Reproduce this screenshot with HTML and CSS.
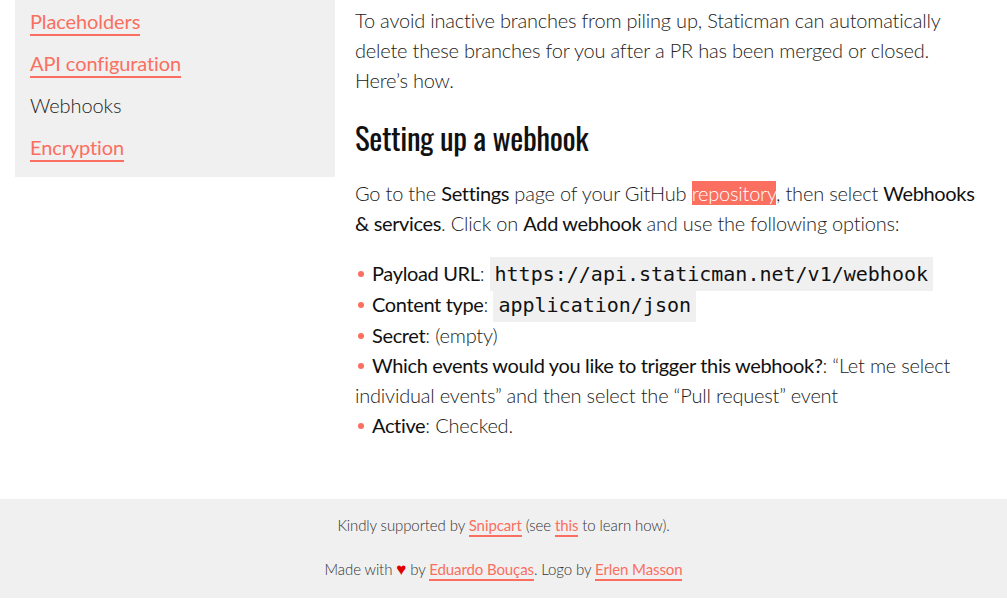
FILE: index.html
```html
<!DOCTYPE html>
<html lang="en">
<head>
<meta charset="utf-8">
<title>Staticman – Webhooks</title>
<link rel="stylesheet" href="styles.css">
</head>
<body>
<div class="page">
  <aside class="sidebar">
    <ul class="nav">
      <li><a class="link" href="#">Placeholders</a></li>
      <li><a class="link" href="#">API configuration</a></li>
      <li class="current">Webhooks</li>
      <li><a class="link" href="#">Encryption</a></li>
    </ul>
  </aside>
  <main class="content">
    <p class="para">To avoid inactive branches from piling up, Staticman can automatically delete these branches for you after a PR has been merged or closed. Here’s how.</p>
    <h2 class="heading">Setting up a webhook</h2>
    <p class="para">Go to the <strong class="em">Settings</strong> page of your GitHub <span class="hl">repository</span>, then select <strong class="em">Webhooks &amp; services</strong>. Click on <strong class="em">Add webhook</strong> and use the following options:</p>
    <ul class="options">
      <li class="opt"><strong class="em">Payload URL</strong>: <code class="code">https://api.staticman.net/v1/webhook</code></li>
      <li class="opt"><strong class="em">Content type</strong>: <code class="code">application/json</code></li>
      <li class="opt"><strong class="em">Secret</strong>: (empty)</li>
      <li class="opt"><strong class="em">Which events would you like to trigger this webhook?</strong>: “Let me select individual events” and then select the “Pull request” event</li>
      <li class="opt"><strong class="em">Active</strong>: Checked.</li>
    </ul>
  </main>
</div>
<footer class="footer">
  <p class="foot-line">Kindly supported by <a class="link" href="#">Snipcart</a> (see <a class="link" href="#">this</a> to learn how).</p>
  <p class="foot-line">Made with <span class="heart">♥</span> by <a class="link" href="#">Eduardo Bouças</a>. Logo by <a class="link" href="#">Erlen Masson</a></p>
</footer>
</body>
</html>
```

FILE: styles.css
```css
* { box-sizing: border-box; }
html, body { margin: 0; padding: 0; }
body {
  font-family: Lato, "Open Sans", sans-serif;
  font-weight: 300;
  color: #222;
  background: #fff;
}
.page {
  display: flex;
  align-items: flex-start;
  padding-left: 15px;
}
.sidebar {
  width: 320px;
  flex: 0 0 320px;
  background: #f0f0f0;
  padding: 0 15px 9px;
}
.nav {
  list-style: none;
  margin: 0;
  padding: 0;
}
.nav li {
  font-size: 20px;
  line-height: 30px;
  padding: 6px 0;
  font-weight: 400;
  color: #222;
  letter-spacing: -0.1px;
}
.nav .current { font-weight: 300; }
.link {
  color: #fa6f5f;
  text-decoration: none;
  border-bottom: 2px solid #fa6f5f;
  padding-bottom: 1px;
  font-weight: 400;
}
.content {
  width: 628px;
  margin-left: 20px;
  padding-top: 5px;
  padding-bottom: 59px;
  letter-spacing: -0.2px;
}
.para {
  margin: 0;
  font-size: 20px;
  line-height: 30px;
}
.heading {
  margin: 22px 0 21px;
  font-family: Oswald, "Liberation Sans Narrow", "DejaVu Sans Condensed", sans-serif;
  font-weight: 400;
  font-size: 31px;
  line-height: 40px;
  color: #111;
  letter-spacing: -0.4px;
}
.em {
  font-weight: 400;
  color: #111;
  letter-spacing: -0.35px;
}
.hl {
  background: #fa6f5f;
  color: #fff;
}
.options {
  list-style: none;
  margin: 20px 0 0;
  padding: 0;
}
.opt {
  font-size: 20px;
  line-height: 30px;
}
.opt::before {
  content: "";
  display: inline-block;
  width: 6px;
  height: 6px;
  border-radius: 50%;
  background: #fa6f5f;
  margin: 0 8px 0 3px;
  vertical-align: 4px;
}
.code {
  font-family: "DejaVu Sans Mono", "Liberation Mono", monospace;
  font-size: 20px;
  font-weight: 400;
  background: #f0f0f0;
  color: #111;
  padding: 5px 5px;
  letter-spacing: 0;
}
.footer {
  background: #f0f0f0;
  padding: 15px 0 18px;
  text-align: center;
  color: #333;
}
.foot-line {
  margin: 0;
  font-size: 15px;
  line-height: 22px;
  letter-spacing: -0.1px;
}
.foot-line + .foot-line { margin-top: 22px; }
.heart {
  color: #e00000;
  font-family: "DejaVu Sans", sans-serif;
  font-size: 17px;
}
```
